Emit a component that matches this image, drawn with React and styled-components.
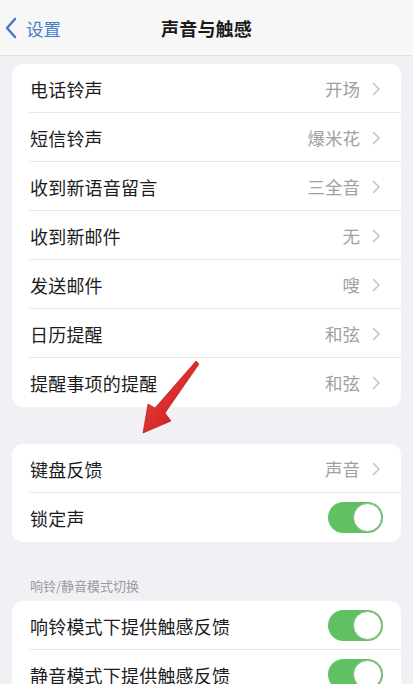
import React from "react";
import styled, { createGlobalStyle } from "styled-components";

const GlobalStyle = createGlobalStyle`
  html, body {
    margin: 0;
    padding: 0;
    background: #f0f0f5;
  }
  body {
    font-family: "Noto Sans CJK SC", "Noto Sans", sans-serif;
    -webkit-font-smoothing: antialiased;
  }
`;

const Page = styled.div`
  position: relative;
  width: 413px;
  height: 684px;
  overflow: hidden;
  background: #f0f0f5;
`;

const NavBar = styled.div`
  height: 56px;
  background: #f7f7f8;
  border-bottom: 1px solid #e0e0e3;
  display: flex;
  align-items: center;
  justify-content: center;
  position: relative;
  box-sizing: border-box;
`;

const Back = styled.div`
  position: absolute;
  left: 4px;
  top: 0;
  height: 56px;
  display: flex;
  align-items: center;
  gap: 8px;
  color: #4a7cc9;
  font-size: 17.5px;
`;

const Title = styled.div`
  font-size: 18px;
  font-weight: 700;
  color: #1a1a1a;
  letter-spacing: 0.2px;
`;

const Content = styled.div`
  padding: 8px 12px 0;
  display: flex;
  flex-direction: column;
`;

const Card = styled.div`
  background: #ffffff;
  border-radius: 11px;
  overflow: hidden;
  margin-bottom: ${(p) => p.$gap || 0}px;
`;

const Row = styled.div`
  height: 49px;
  display: flex;
  align-items: center;
  padding: 0 20px 0 18px;
  position: relative;
  &:not(:last-child)::after {
    content: "";
    position: absolute;
    left: 17px;
    right: 0;
    bottom: 0;
    height: 1px;
    background: #e6e6e9;
  }
`;

const Label = styled.div`
  flex: 1;
  font-size: 18px;
  color: #1c1c1e;
  letter-spacing: 0.2px;
`;

const Value = styled.div`
  font-size: 17.5px;
  color: #a0a0a4;
  margin-right: 12px;
`;

const Toggle = styled.div`
  width: 55px;
  height: 31px;
  border-radius: 16px;
  background: #5fc161;
  position: relative;
  margin-right: -2px;
  &::after {
    content: "";
    position: absolute;
    right: 1px;
    top: 1px;
    width: 27px;
    height: 27px;
    border-radius: 50%;
    background: #fff;
    border: 1px solid #8fb890;
  }
`;

const SectionHeader = styled.div`
  font-size: 13px;
  color: #9a9a9e;
  padding: 0 18px;
  height: 22px;
  line-height: 22px;
  margin-bottom: 4px;
`;

const ArrowLayer = styled.svg`
  position: absolute;
  left: 0;
  top: 0;
  pointer-events: none;
`;

const Chevron = () => (
  <svg width="9" height="14" viewBox="0 0 9 14">
    <path d="M1.5 1.5 L7 7 L1.5 12.5" fill="none" stroke="#c4c4c8" strokeWidth="1.6" strokeLinecap="round" strokeLinejoin="round" />
  </svg>
);

const BackChevron = () => (
  <svg width="14" height="22" viewBox="0 0 14 22">
    <path d="M11 2 L3 11 L11 20" fill="none" stroke="#4a7cc9" strokeWidth="2.6" strokeLinecap="round" strokeLinejoin="round" />
  </svg>
);

const LinkRow = ({ label, value }) => (
  <Row>
    <Label>{label}</Label>
    <Value>{value}</Value>
    <Chevron />
  </Row>
);

const SwitchRow = ({ label }) => (
  <Row>
    <Label>{label}</Label>
    <Toggle />
  </Row>
);

const tones = [
  ["电话铃声", "开场"],
  ["短信铃声", "爆米花"],
  ["收到新语音留言", "三全音"],
  ["收到新邮件", "无"],
  ["发送邮件", "嗖"],
  ["日历提醒", "和弦"],
  ["提醒事项的提醒", "和弦"],
];

export default function App() {
  return (
    <Page>
      <GlobalStyle />
      <NavBar>
        <Back>
          <BackChevron />
          <span>设置</span>
        </Back>
        <Title>声音与触感</Title>
      </NavBar>
      <Content>
        <Card $gap={37}>
          {tones.map(([l, v]) => (
            <LinkRow key={l} label={l} value={v} />
          ))}
        </Card>
        <Card $gap={33}>
          <LinkRow label="键盘反馈" value="声音" />
          <SwitchRow label="锁定声" />
        </Card>
        <SectionHeader>响铃/静音模式切换</SectionHeader>
        <Card>
          <SwitchRow label="响铃模式下提供触感反馈" />
          <SwitchRow label="静音模式下提供触感反馈" />
        </Card>
      </Content>
      <ArrowLayer width="413" height="684" viewBox="0 0 413 684">
        <defs>
          <linearGradient id="ar" x1="0" y1="0" x2="1" y2="1">
            <stop offset="0" stopColor="#f24444" />
            <stop offset="1" stopColor="#c41616" />
          </linearGradient>
        </defs>
        <path
          d="M196 361 L199 364 L165 413 L171 421 L143 433 L148 404 L155 408 Z"
          fill="url(#ar)"
          stroke="#a80e0e"
          strokeWidth="0.6"
          strokeLinejoin="round"
        />
      </ArrowLayer>
    </Page>
  );
}
